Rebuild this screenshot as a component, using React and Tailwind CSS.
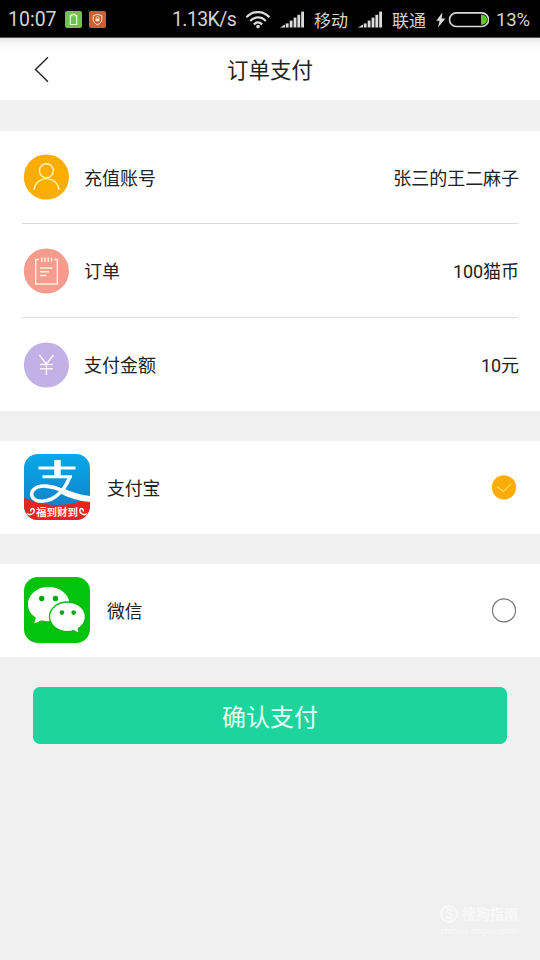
import { useState } from 'react';

function SignalBars() {
  return (
    <svg width="24" height="17" viewBox="0 0 24 17" fill="#dcdcdc">
      <path d="M0 16.5 L5 13.5 V16.5 Z" />
      <rect x="5.8" y="12.4" width="2.8" height="4.1" />
      <rect x="9.7" y="9.6" width="2.8" height="6.9" />
      <rect x="13.6" y="6.6" width="2.8" height="9.9" />
      <rect x="17.4" y="3.8" width="2.8" height="12.7" />
      <rect x="21.2" y="0.6" width="2.8" height="15.9" />
    </svg>
  );
}

function StatusBar() {
  return (
    <div className="flex h-[38px] items-center border-b border-[#555] bg-black pt-[2px] pl-[8px] text-[19.5px] leading-none text-[#d4d4d4]">
      <span className="w-[57px] pt-px">10:07</span>
      <svg width="17" height="17" viewBox="0 0 17 17">
        <rect width="17" height="17" rx="2" fill="#72c245" />
        <path d="M5.3 4.6 H7 V3.2 H10 V4.6 H11.7 V13.5 H5.3 Z" fill="none" stroke="#eaffdc" strokeWidth="1.1" />
      </svg>
      <svg className="ml-[7px]" width="17" height="17" viewBox="0 0 17 17">
        <rect width="17" height="17" rx="2" fill="#ce602f" />
        <path d="M8.5 3.4 L12.8 4.6 V8.4 C12.8 11 11 12.6 8.5 13.8 C6 12.6 4.2 11 4.2 8.4 V4.6 Z" fill="none" stroke="#ffe1cd" strokeWidth="1" />
        <path d="M7.2 7.8 V6.8 A1.3 1.3 0 0 1 9.8 6.8 V7.8" fill="none" stroke="#ffe1cd" strokeWidth="0.8" />
        <rect x="6.6" y="7.6" width="3.8" height="2.7" fill="#ffe1cd" />
      </svg>
      <span className="ml-[66px] w-[73px] pt-px tracking-[-0.6px] whitespace-nowrap">1.13K/s</span>
      <svg width="26" height="18" viewBox="0 0 26 18" fill="none" stroke="#dcdcdc" strokeWidth="2.2">
        <path d="M1.5 6.3 C8 -0.7 18 -0.7 24.5 6.3" />
        <path d="M5.2 10 C9.6 5.2 16.4 5.2 20.8 10" />
        <path d="M8.9 13.4 C11.3 10.8 14.7 10.8 17.1 13.4" />
        <circle cx="13" cy="15.6" r="1.8" fill="#dcdcdc" stroke="none" />
      </svg>
      <div className="ml-[9px] flex items-center"><SignalBars /></div>
      <span className="ml-[10px] w-[44px] pt-[3px] text-[17px]">移动</span>
      <SignalBars />
      <span className="ml-[10px] w-[44px] pt-[3px] text-[17px]">联通</span>
      <svg width="53" height="16" viewBox="0 0 53 16">
        <path d="M6.4 0.5 L0.2 8.8 H3.6 L2 15.4 L9.4 6.4 H5.6 Z" fill="#dcdcdc" />
        <rect x="13.5" y="0.9" width="39" height="13.6" rx="6.8" fill="none" stroke="#d8d8d8" strokeWidth="1.6" />
        <path d="M45 2.7 H46 A5 5 0 0 1 46 12.7 H45 Z" fill="#61c52c" />
      </svg>
      <span className="ml-[7px] pt-[2px] text-[18.5px] tracking-[-0.2px]">13%</span>
    </div>
  );
}

function AccountIcon() {
  return (
    <svg width="46" height="46" viewBox="0 0 46 46" fill="none">
      <circle cx="23.4" cy="23" r="22.6" fill="#fcad02" />
      <g stroke="#fff3b8" strokeWidth="1.4" strokeLinecap="round">
        <circle cx="23.4" cy="16.7" r="7" />
        <path d="M11 35.3 C13.5 21 33.5 21 36 35.3" />
      </g>
    </svg>
  );
}

function OrderIcon() {
  return (
    <svg width="46" height="46" viewBox="0 0 46 46" fill="none">
      <circle cx="23.4" cy="23" r="22.6" fill="#f59c8c" />
      <g stroke="#fff0df" strokeWidth="1.4">
        <path d="M16 11.5 H12.7 V36 H34.3 V11.5 H31" />
        <path d="M18.8 9.5 V14 M22 9.5 V14 M25.2 9.5 V14 M28.4 9.5 V14" />
        <path d="M17 20 H29.5 M17 23.7 H26 M17 27.5 H23.5" />
      </g>
    </svg>
  );
}

function AmountIcon() {
  return (
    <svg width="46" height="46" viewBox="0 0 46 46" fill="none">
      <circle cx="23.4" cy="23" r="22.6" fill="#c2b1e7" />
      <path
        d="M16.4 13 L23.4 22 L30.4 13 M23.4 22 V33 M16.9 22.5 H29.9 M16.9 26.8 H29.9"
        stroke="#fff5f8"
        strokeWidth="1.5"
      />
    </svg>
  );
}

function AlipayLogo() {
  return (
    <svg width="66" height="66" viewBox="0 0 66 66">
      <defs>
        <clipPath id="alipay-clip">
          <rect width="66" height="66" rx="14" />
        </clipPath>
        <linearGradient id="alipay-bg" x1="0" y1="0" x2="0" y2="1">
          <stop offset="0" stopColor="#08a9e8" />
          <stop offset="1" stopColor="#1479c4" />
        </linearGradient>
      </defs>
      <g clipPath="url(#alipay-clip)">
        <rect width="66" height="66" fill="url(#alipay-bg)" />
        <path d="M0 44 Q33 58 66 44 V66 H0 Z" fill="#e3271f" />
        <g fill="none" stroke="#fff">
          <path d="M33.5 6 V22" strokeWidth="6.5" />
          <path d="M14.5 14 H51.5" strokeWidth="3.2" />
          <path d="M18.5 22.8 H48" strokeWidth="3" />
          <path d="M46 22 C42 34 32 47.2 18 47.2 C8 47.2 5.5 40 9.5 35.8 C15 30 27 31.5 38 36.5 C48 41 55 43.5 66 45" strokeWidth="3.6" />
          <path d="M37 36.5 C46 41 55 44 66 45" strokeWidth="6" />
          <path d="M3 59.5 C7 62.5 11 58.5 10 55.5 C8.5 53.5 6 55 7 57.5 M63 59.5 C59 62.5 55 58.5 56 55.5 C57.5 53.5 60 55 59 57.5" strokeWidth="1.5" />
        </g>
        <text x="33" y="61.5" textAnchor="middle" fontSize="10.5" fontWeight="700" fill="#fff3e8">福到财到</text>
      </g>
    </svg>
  );
}

function WechatLogo() {
  return (
    <svg width="66" height="66" viewBox="0 0 66 66">
      <rect width="66" height="66" rx="14" fill="#03c40c" />
      <path
        d="M24.5 10 C13 10 4 17.8 4 27.5 C4 33 7 37.5 11.8 40.5 L10.2 46.5 L17.5 43.2 C19.7 43.9 22 44.2 24.5 44.2 C36 44.2 45.5 36.5 45.5 27 C45.5 17.5 36 10 24.5 10 Z"
        fill="#fff"
      />
      <path
        d="M43.5 25 C33.6 25 25.5 31.6 25.5 39.8 C25.5 48 33.6 54.6 43.5 54.6 C45.7 54.6 47.7 54.3 49.6 53.7 L55.8 56.8 L54.3 51.5 C58.8 48.7 61.5 44.5 61.5 39.8 C61.5 31.6 53.4 25 43.5 25 Z"
        fill="#fff"
        stroke="#03b90a"
        strokeWidth="1.4"
      />
      <g fill="#06a80d">
        <circle cx="17.7" cy="21.5" r="2.7" />
        <circle cx="31.5" cy="21.5" r="2.7" />
        <circle cx="38" cy="35.6" r="2.3" />
        <circle cx="49.7" cy="35.6" r="2.3" />
      </g>
    </svg>
  );
}

const ROWS = [
  { label: '充值账号', value: '张三的王二麻子', Icon: AccountIcon },
  { label: '订单', value: '100猫币', Icon: OrderIcon },
  { label: '支付金额', value: '10元', Icon: AmountIcon }
];

const METHODS = [
  { id: 'alipay', label: '支付宝', Logo: AlipayLogo },
  { id: 'wechat', label: '微信', Logo: WechatLogo }
];

function RadioMark({ checked }) {
  return (
    <svg width="26" height="26" viewBox="0 0 26 26" fill="none">
      {checked ? (
        <>
          <circle cx="13" cy="13.4" r="12.1" fill="#fbac08" />
          <path d="M6 12.4 L12.5 17.6 L20 9.9" stroke="#ffd95a" strokeWidth="1.3" />
        </>
      ) : (
        <circle cx="13" cy="13.4" r="11.5" stroke="#777" strokeWidth="1.2" />
      )}
    </svg>
  );
}

export default function App() {
  const [method, setMethod] = useState('alipay');

  return (
    <div className="flex h-[960px] w-[540px] flex-col overflow-hidden bg-[#f0f0f0] font-['Roboto','Noto_Sans_CJK_SC',sans-serif] text-[#222]">
      <StatusBar />

      {/* Header */}
      <header className="grid h-[62px] grid-cols-[1fr_auto_1fr] items-center bg-linear-to-b from-[#e6e6e6] via-[#fafafa] via-10% to-white to-25%">
        <button className="ml-[34px] w-4" aria-label="返回">
          <svg width="16" height="27" viewBox="0 0 16 27" fill="none">
            <path d="M14 1.2 L1.5 13.5 L14 25.8" stroke="#222" strokeWidth="1.4" />
          </svg>
        </button>
        <h1 className="pt-[3px] text-[21.5px] leading-none">订单支付</h1>
      </header>

      {/* Order details */}
      <section className="mt-[31px] bg-white px-[22px]">
        {ROWS.map(({ label, value, Icon }, index) => (
          <div
            key={label}
            className={`flex items-center pl-px text-[18px] leading-none ${index === 1 ? 'h-[94px]' : 'h-[93px]'} ${index < 2 ? 'border-b border-[#dcdcdc]' : ''}`}
          >
            <Icon />
            <span className="ml-[15px] pt-[3px]">{label}</span>
            <span className="-mr-px ml-auto pt-[3px] tracking-[-0.05px]">{value}</span>
          </div>
        ))}
      </section>

      {/* Payment methods */}
      {METHODS.map(({ id, label, Logo }) => (
        <button
          key={id}
          onClick={() => setMethod(id)}
          className="mt-[30px] flex h-[93px] items-center bg-white pr-[23px] pb-px pl-[24px] text-[17.8px] leading-none"
        >
          <Logo />
          <span className="ml-[17px] pt-[3px]">{label}</span>
          <span className="ml-auto">
            <RadioMark checked={method === id} />
          </span>
        </button>
      ))}

      <button className="mx-[33px] mt-[30px] h-[57px] rounded-[7px] bg-[#1dd49d] pt-[5px] text-[24px] leading-none text-[#e6fff8]">
        确认支付
      </button>

      {/* Watermark */}
      <div className="mt-auto mr-[22px] mb-[25px] flex flex-col items-end text-[#f8f8f8]">
        <div className="flex items-center gap-1">
          <span className="flex size-[18px] items-center justify-center rounded-full border-2 border-[#f8f8f8] text-[14px] leading-none font-bold">S</span>
          <span className="text-[14px] leading-none font-bold">搜狗指南</span>
        </div>
        <span className="mt-[3px] text-[9.5px] leading-none">zhinan.sogou.com</span>
      </div>
    </div>
  );
}
